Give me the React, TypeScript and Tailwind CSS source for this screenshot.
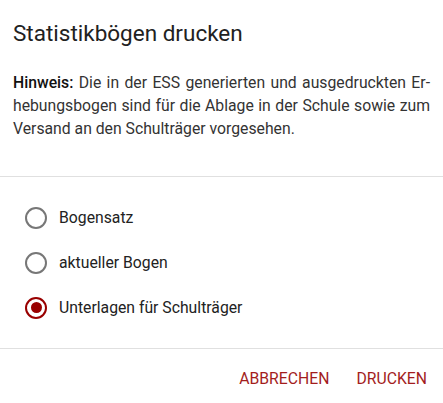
import { useState } from 'react';

const options = ['Bogensatz', 'aktueller Bogen', 'Unterlagen für Schulträger'];

const App = () => {
    const [selected, setSelected] = useState(2);

    return (
        <div className="w-[443px] h-[403px] bg-white font-['Roboto',sans-serif] flex flex-col" lang="de">
            {/* Title */}
            <div className="px-[13px] pt-[17px] text-[22.5px] leading-[32px] text-[#212121]">
                Statistikbögen drucken
            </div>

            {/* Hint */}
            <p className="px-[13px] pt-[22px] pb-[36px] text-[15.75px] leading-[23px] text-[#333] text-justify hyphens-manual">
                <span className="font-medium text-[#111]">Hinweis:</span> Die in der ESS generierten und ausgedruckten Er&shy;hebungsbogen sind für die Ablage in der Schule sowie zum Versand an den Schulträger vorgesehen.
            </p>

            {/* Options */}
            <div className="border-t border-[#e0e0e0] py-[18px] flex flex-col">
                {options.map((label, i) => {
                    const active = selected === i;
                    return (
                        <label
                            key={label}
                            onClick={() => setSelected(i)}
                            className="h-[45px] flex items-center pl-[25px] cursor-pointer text-[15.75px] text-[#222]"
                        >
                            <span
                                className={`w-[22px] h-[22px] rounded-full border-2 flex items-center justify-center ${active ? 'border-[#990000]' : 'border-[#777]'}`}
                            >
                                {active && <span className="w-[11px] h-[11px] rounded-full bg-[#990000]" />}
                            </span>
                            <span className="ml-[12px]">{label}</span>
                        </label>
                    );
                })}
            </div>

            {/* Actions */}
            <div className="border-t border-[#e0e0e0] flex-1 flex items-center justify-end gap-[27px] pr-[16px] pt-[6px]">
                <button className="text-[15.75px] uppercase text-[#a31d1d]">Abbrechen</button>
                <button className="text-[15.75px] uppercase text-[#a31d1d]">Drucken</button>
            </div>
        </div>
    );
};

export default App;
